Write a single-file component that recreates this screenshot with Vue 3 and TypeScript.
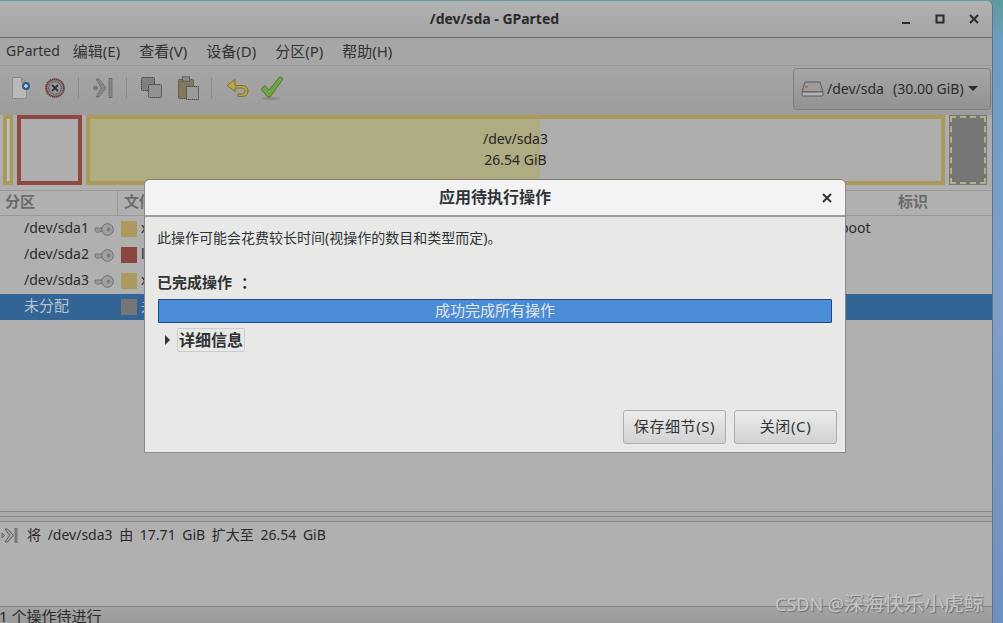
<template>
  <div class="desktop">
    <div class="window">
      <header class="titlebar">
        <span class="title">/dev/sda - GParted</span>
        <div class="wm-buttons">
          <svg width="12" height="12" viewBox="0 0 12 12"><rect x="2" y="9" width="8" height="2" fill="#2c2c2c" /></svg>
          <svg width="12" height="12" viewBox="0 0 12 12"><rect x="2.500" y="2.500" width="7" height="7" fill="none" stroke="#2c2c2c" stroke-width="2" /></svg>
          <svg width="12" height="12" viewBox="0 0 12 12"><path d="M2 2l8 8M10 2l-8 8" stroke="#2c2c2c" stroke-width="2" /></svg>
        </div>
      </header>

      <nav class="menubar">
        <span v-for="item in menus" :key="item">{{ item }}</span>
      </nav>

      <div class="toolbar">
        <div class="tools">
          <!-- new -->
          <svg class="tool t-new" width="20" height="24" viewBox="0 0 20 24">
            <path d="M1.500 1.500h9l5 5v16h-14z" fill="#b9b9b9" stroke="#8a8a8a" />
            <path d="M10.500 1.500v5h5" fill="#9c9c9c" stroke="#8a8a8a" />
            <circle cx="15" cy="10" r="4" fill="#2f5a8e" />
            <path d="M13 10h4M15 8v4" stroke="#d8d8d8" stroke-width="1.400" />
          </svg>
          <!-- delete -->
          <svg class="tool t-del" width="20" height="20" viewBox="0 0 20 20">
            <circle cx="10" cy="10" r="8.800" fill="#8c8c8c" stroke="#6e3030" stroke-width="2" stroke-dasharray="1.400 .5" />
            <circle cx="10" cy="10" r="6.200" fill="#9a9a9a" stroke="#444" stroke-dasharray="1 .5" />
            <path d="M7 7l6 6M13 7l-6 6" stroke="#333" stroke-width="1.800" />
          </svg>
          <i class="tool-sep"></i>
          <!-- resize/move -->
          <svg class="tool t-move" width="20" height="22" viewBox="0 0 20 22">
            <circle cx="2.500" cy="11" r="2" fill="#7e7e7e" stroke="#5e5e5e" stroke-dasharray="1 .5" />
            <path d="M3 2h3l7 9-7 9H3l5.500-9z" fill="#8a8a8a" stroke="#5e5e5e" stroke-dasharray="1.300 .6" />
            <rect x="16" y="1.500" width="3" height="19" fill="#8a8a8a" stroke="#5e5e5e" stroke-dasharray="1.300 .6" />
          </svg>
          <i class="tool-sep"></i>
          <!-- copy -->
          <svg class="tool t-copy" width="21" height="21" viewBox="0 0 21 21">
            <rect x=".5" y=".5" width="13" height="13" rx="1" fill="#808080" stroke="#3e3e3e" stroke-dasharray="1.300 .6" />
            <rect x="7.500" y="7.500" width="13" height="13" rx="1" fill="#929292" stroke="#3e3e3e" stroke-dasharray="1.300 .6" />
          </svg>
          <!-- paste -->
          <svg class="tool t-paste" width="21" height="24" viewBox="0 0 21 24">
            <rect x=".5" y="3.500" width="15" height="19" rx="1" fill="#84785f" stroke="#544c38" stroke-dasharray="1.300 .6" />
            <rect x="4.500" y=".8" width="7" height="4.500" fill="#8c8c8c" stroke="#5c5c5c" />
            <rect x="8.500" y="10.500" width="12" height="13" fill="#9a9a9a" stroke="#444" stroke-dasharray="1.300 .6" />
          </svg>
          <i class="tool-sep"></i>
          <!-- undo -->
          <svg class="tool t-undo" width="23" height="20" viewBox="0 0 23 20">
            <path d="M9 1.500L1 7.500 9 13.500V10h6c2.600 0 4 1.200 4 3s-1.400 3-4 3h-3v2.500h4c4 0 6-2.200 6-5.500s-2-5.500-6-5.500H9z" fill="#b8a648" stroke="#7f7128" />
          </svg>
          <!-- apply -->
          <svg class="tool t-ok" width="24" height="26" viewBox="0 0 24 26">
            <ellipse cx="11" cy="23.500" rx="9" ry="1.500" fill="#8a8a8a" />
            <path d="M1 14l4-3.500 4 4.500L20 1.500l3 2.500L10 22h-2.500z" fill="#6fa347" stroke="#4a7a2c" stroke-linejoin="round" />
          </svg>
        </div>
        <div class="device-picker">
          <svg width="23" height="16" viewBox="0 0 23 16">
            <path d="M4 1h15l3 10H1z" fill="#9c9c9c" stroke="#5a5a5a" />
            <rect x="1" y="11" width="21" height="4" rx="1" fill="#b4b4b4" stroke="#5a5a5a" />
            <rect x="4" y="5" width="3" height="1.500" fill="#a8642c" />
          </svg>
          <span class="device-name">/dev/sda</span>
          <span class="device-size">(30.00 GiB)</span>
          <i class="caret"></i>
        </div>
      </div>

      <section class="disk-map">
        <div class="part tiny"><i></i></div>
        <div class="part boot"></div>
        <div class="part main">
          <div class="used"></div>
          <div class="part-label">
            <span>/dev/sda3</span>
            <span>26.54 GiB</span>
          </div>
        </div>
        <div class="part free"></div>
      </section>

      <section class="table">
        <div class="table-head">
          <span class="col-name">分区</span>
          <span class="col-fs">文件系统</span>
          <span class="col-flags">标识</span>
        </div>
        <div v-for="row in rows" :key="row.name" class="table-row" :class="{ selected: row.selected }">
          <span class="col-name">{{ row.name }}</span>
          <svg v-if="!row.selected" class="key" width="20" height="13" viewBox="0 0 20 13">
            <path d="M1 5h10v3.500H6l-1 1.200-1-1.200-1 1.200-2-2z" fill="#989898" stroke="#6c6c6c" stroke-width=".8" />
            <circle cx="13.500" cy="6.500" r="5.800" fill="#a0a0a0" stroke="#6c6c6c" />
            <circle cx="14.500" cy="6.500" r="2" fill="#7c7c7c" />
          </svg>
          <span v-else class="key-gap"></span>
          <i class="swatch" :style="{ background: row.color }"></i>
          <span class="col-fs-text">{{ row.fs }}</span>
          <span class="col-flags-text">{{ row.flags }}</span>
        </div>
      </section>

      <div class="pane-handle"></div>

      <section class="pending">
        <svg width="17" height="17" viewBox="0 0 17 17">
          <path d="M1 6l2.500 2.500L1 11z" fill="#9a9a9a" stroke="#666" />
          <path d="M4 2h2.500l6 6.500-6 6.500H4l4.500-6.500z" fill="#a4a4a4" stroke="#5e5e5e" />
          <rect x="14" y="1.500" width="2" height="14" fill="#8a8a8a" stroke="#5e5e5e" stroke-width=".7" />
        </svg>
        <span>将 /dev/sda3 由 17.71 GiB 扩大至 26.54 GiB</span>
      </section>

      <footer class="statusbar">1 个操作待进行</footer>
    </div>

    <div class="dialog">
      <div class="dialog-title">
        <span>应用待执行操作</span>
        <svg class="dialog-close" width="10" height="10" viewBox="0 0 10 10"><path d="M1 1l8 8M9 1L1 9" stroke="#2e3436" stroke-width="2" /></svg>
      </div>
      <div class="dialog-body">
        <p class="message">此操作可能会花费较长时间(视操作的数目和类型而定)。</p>
        <p class="done-label">已完成操作 ：</p>
        <div class="progress">成功完成所有操作</div>
        <div class="expander">
          <i class="arrow"></i>
          <span class="expander-label">详细信息</span>
        </div>
        <div class="actions">
          <button type="button"><span>保存细节(S)</span></button>
          <button type="button"><span>关闭(C)</span></button>
        </div>
      </div>
    </div>

    <div class="watermark"><span class="wm-latin">CSDN @</span>深海快乐小虎鲸</div>
  </div>
</template>

<script setup lang="ts">
interface PartitionRow {
  name: string;
  color: string;
  fs: string;
  flags: string;
  selected?: boolean;
}

const menus: string[] = ['GParted', '编辑(E)', '查看(V)', '设备(D)', '分区(P)', '帮助(H)'];

const rows: PartitionRow[] = [
  { name: '/dev/sda1', color: '#ab9a5b', fs: 'xfs', flags: 'boot' },
  { name: '/dev/sda2', color: '#8b473d', fs: 'lvm2 pv', flags: '' },
  { name: '/dev/sda3', color: '#ab9a5b', fs: 'xfs', flags: '' },
  { name: '未分配', color: '#767676', fs: '未分配', flags: '', selected: true },
];
</script>

<style>
html,
body {
  margin: 0;
  overflow: hidden;
}
</style>

<style scoped>
.desktop {
  position: relative;
  width: 1003px;
  height: 623px;
  overflow: hidden;
  display: flex;
  align-items: stretch;
  padding-top: 1px;
  box-sizing: border-box;
  background: linear-gradient(180deg, #5f9a9c 0, #6f9cc0 40px, #7f9fc8 300px, #6e90bc 100%);
  font-family: "Noto Sans", "Noto Sans CJK SC", sans-serif;
  font-size: 14px;
  color: #262626;
}

.window {
  width: 993px;
  height: 622px;
  box-sizing: border-box;
  display: flex;
  flex-direction: column;
  background: #b0b0b0;
  border-right: 1px solid #5f7288;
  border-top-right-radius: 6px;
  overflow: hidden;
}

.titlebar {
  height: 36px;
  flex: none;
  position: relative;
  display: flex;
  align-items: center;
  justify-content: center;
  background: linear-gradient(180deg, #b2b2b2, #a4a4a4);
  border-bottom: 1px solid #6c6c6c;
}

.title {
  font-weight: 700;
  font-size: 14px;
  color: #2a2a2a;
  margin-top: -2px;
  margin-left: -3px;
}

.wm-buttons {
  position: absolute;
  right: 12px;
  top: 12px;
  display: flex;
  gap: 22px;
}

.menubar {
  height: 28px;
  flex: none;
  box-sizing: border-box;
  display: flex;
  align-items: center;
  gap: 19px;
  padding: 0 0 2px 6px;
  background: #a6a6a6;
  border-bottom: 1px solid #999;
  color: #333;
  font-size: 15px;
}

.menubar span:first-child {
  font-size: 14px;
  margin-right: -6px;
}

.toolbar {
  height: 49px;
  flex: none;
  box-sizing: border-box;
  display: flex;
  align-items: center;
  justify-content: space-between;
  padding: 0 1px 0 11px;
  background: linear-gradient(180deg, #a6a6a6, #9c9c9c);
}

.tools {
  display: flex;
  align-items: center;
  height: 30px;
  margin-top: -6px;
}

.tool {
  flex: none;
}

.t-new {
  margin-right: 14px;
}

.t-del {
  margin-right: 12px;
}

.t-move {
  margin-right: 12px;
}

.t-copy {
  margin-right: 16px;
}

.t-paste {
  margin-right: 11px;
}

.t-undo {
  margin-right: 11px;
}

.tool-sep {
  width: 1px;
  height: 22px;
  background: #8c8c8c;
  margin: 0 14px 0 1px;
}

.device-picker {
  width: 198px;
  height: 42px;
  box-sizing: border-box;
  display: flex;
  align-items: center;
  padding: 0 12px 0 7px;
  border: 1px solid #7e7e7e;
  border-radius: 4px;
  background: linear-gradient(180deg, #a6a6a6, #929292);
  color: #2b2b2b;
  margin-bottom: 4px;
}

.device-name {
  margin-left: 3px;
}

.device-size {
  margin-left: 9px;
}

.caret {
  margin-left: auto;
  border-left: 5px solid transparent;
  border-right: 5px solid transparent;
  border-top: 5px solid #2a2a2a;
}

.disk-map {
  height: 70px;
  flex: none;
  display: flex;
  gap: 4px;
  padding: 0 5px 0 3px;
  background: #aeaeae;
}

.part {
  box-sizing: border-box;
  height: 70px;
  border: 4px solid #aa9a5a;
  flex: none;
}

.tiny {
  width: 10px;
  display: flex;
  justify-content: flex-start;
  border-right-width: 3px;
}

.tiny i {
  width: 2px;
  background: #c4c4b8;
}

.boot {
  width: 65px;
  border-color: #8e4a42;
}

.main {
  width: 859px;
  position: relative;
  display: flex;
}

.used {
  width: 450px;
  background: #aeac80;
}

.part-label {
  position: absolute;
  left: 0;
  right: 0;
  top: 9px;
  display: flex;
  flex-direction: column;
  align-items: center;
  line-height: 21px;
  font-size: 14px;
}

.free {
  width: 38px;
  border: none;
  background: #767676;
  outline: 2px dashed #b4b284;
  outline-offset: -3px;
}

.table {
  flex: 1;
  margin-top: 5px;
  min-height: 0;
  background: #b0b0b0;
}

.table-head {
  height: 26px;
  box-sizing: border-box;
  display: flex;
  align-items: center;
  border-top: 1px solid #989898;
  border-bottom: 1px solid #989898;
  font-weight: 700;
  font-size: 15px;
  color: #6a6a6a;
  position: relative;
}

.table-head .col-name {
  width: 112px;
  padding-left: 5px;
  border-right: 1px solid #989898;
}

.table-head .col-name,
.table-head .col-fs,
.table-head .col-flags {
  padding-bottom: 2px;
  height: 22px;
  line-height: 20px;
}

.table-head .col-fs {
  margin-left: 6px;
}

.table-head .col-flags {
  position: absolute;
  left: 898px;
}

.table-row {
  height: 26px;
  display: flex;
  align-items: center;
  color: #2a2a2a;
  position: relative;
}

.table-row.selected {
  background: #336496;
  color: #b8c4d0;
  font-size: 15px;
}

.table-row .col-name {
  width: 70px;
  padding-left: 24px;
  flex: none;
  line-height: 20px;
  margin-bottom: 2px;
}

.table-row.selected .col-name {
  margin-bottom: 4px;
}

.key {
  flex: none;
}

.key-gap {
  width: 20px;
  flex: none;
}

.swatch {
  width: 16px;
  height: 16px;
  margin-left: 7px;
  flex: none;
}

.col-fs-text {
  margin-left: 4px;
  line-height: 20px;
  margin-bottom: 2px;
}

.col-flags-text {
  position: absolute;
  left: 840px;
  top: 2px;
  line-height: 20px;
}

.pane-handle {
  height: 11px;
  flex: none;
  box-sizing: border-box;
  border-top: 1px solid #868686;
  border-bottom: 1px solid #868686;
  background: linear-gradient(#868686, #868686) 0 4px / 100% 1px no-repeat #aaaaaa;
}

.pending {
  height: 84px;
  flex: none;
  box-sizing: border-box;
  display: flex;
  align-items: flex-start;
  gap: 9px;
  padding: 2px 0 0 1px;
  background: #b0b0b0;
  color: #2a2a2a;
  word-spacing: 3px;
}

.pending svg {
  margin-top: 3px;
  flex: none;
}

.statusbar {
  flex: none;
  height: 17px;
  box-sizing: border-box;
  margin-left: -1px;
  border-top: 1px solid #808080;
  background: linear-gradient(180deg, #a4a4a4, #9a9a9a);
  line-height: 19px;
  font-size: 15px;
  color: #2a2a2a;
}

/* dialog sits over the dimmed main window */
.dialog {
  position: absolute;
  left: 144px;
  top: 179px;
  width: 702px;
  height: 274px;
  box-sizing: border-box;
  display: flex;
  flex-direction: column;
  border: 1px solid #8a8a8a;
  border-top-color: #7f7f6a;
  border-radius: 6px 6px 0 0;
  background: #e8e8e7;
  overflow: hidden;
}

.dialog-title {
  height: 37px;
  flex: none;
  box-sizing: border-box;
  position: relative;
  display: flex;
  align-items: center;
  justify-content: center;
  padding-bottom: 3px;
  background: #f3f3f3;
  border-bottom: 2px solid #9e9e9e;
  font-weight: 700;
  font-size: 16px;
  color: #2e3436;
}

.dialog-close {
  position: absolute;
  right: 13px;
  top: 13px;
}

.dialog-body {
  flex: 1;
  display: flex;
  flex-direction: column;
  padding: 0 8px 8px 12px;
  min-height: 0;
}

.message {
  margin: 11px 0 0;
  font-size: 14px;
  line-height: 20px;
  color: #2e3436;
}

.done-label {
  margin: 24px 0 0;
  font-size: 15px;
  line-height: 20px;
  font-weight: 700;
  color: #2e3436;
  word-spacing: 5px;
}

.progress {
  margin: 7px 5px 0 1px;
  height: 24px;
  box-sizing: border-box;
  border: 1px solid #1c4c80;
  border-radius: 1px;
  background: #4a8cd6;
  color: #e6e6e6;
  text-align: center;
  line-height: 20px;
  font-size: 15px;
}

.expander {
  display: flex;
  align-items: center;
  margin: 5px 0 0 8px;
}

.arrow {
  border-top: 5px solid transparent;
  border-bottom: 5px solid transparent;
  border-left: 5px solid #2e3436;
  margin-right: 7px;
}

.expander-label {
  box-sizing: border-box;
  width: 68px;
  height: 24px;
  border: 1px solid #cccccc;
  border-radius: 2px;
  text-align: center;
  line-height: 22px;
  font-weight: 700;
  font-size: 16px;
  color: #2e3436;
}

.actions {
  margin-top: auto;
  display: flex;
  justify-content: flex-end;
  gap: 8px;
}

.actions button {
  width: 103px;
  height: 34px;
  border: 1px solid #adadad;
  border-radius: 3px;
  background: linear-gradient(180deg, #ececec, #d2d2d2);
  font-family: inherit;
  font-size: 15px;
  letter-spacing: 0.6px;
  color: #2e3436;
  padding: 0 0 3px;
}

.watermark {
  position: absolute;
  left: 775px;
  top: 590px;
  font-size: 20px;
  line-height: 28px;
  color: #c6c6c6;
  text-shadow: 1px 1px 1px #6e6e6e;
  white-space: nowrap;
}

.wm-latin {
  font-size: 18px;
}
</style>
